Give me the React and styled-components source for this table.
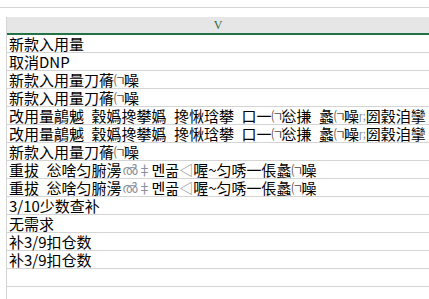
import React from "react";
import styled, { createGlobalStyle } from "styled-components";

const Global = createGlobalStyle`
  html, body { margin: 0; padding: 0; background: #ffffff; }
  body { width: 429px; height: 299px; overflow: hidden; font-family: "Noto Sans CJK SC", sans-serif; }
`;

const Page = styled.div`
  width: 429px;
  height: 299px;
  overflow: hidden;
  display: flex;
  flex-direction: column;
`;

const FormulaEdge = styled.div`
  height: 7px;
  border-bottom: 1px solid #d4d4d4;
  flex: none;
`;

const Gap = styled.div`
  height: 9px;
  flex: none;
`;

const Sheet = styled.div`
  margin-left: 6px;
  flex: 1;
  display: flex;
  flex-direction: column;
  border-left: 1px solid #d4d4d4;
  min-width: 0;
`;

const ColHeader = styled.div`
  height: 16px;
  flex: none;
  background: #e6e6e6;
  border-bottom: 2px solid #217346;
  display: flex;
  align-items: center;
  justify-content: center;
  font-family: "Liberation Serif", "Noto Sans CJK SC", serif;
  font-size: 12px;
  color: #2f6a49;
  line-height: 16px;
`;

const Row = styled.div`
  height: 17px;
  flex: none;
  border-bottom: 1px solid #d4d4d4;
  padding-left: 2px;
  display: flex;
  align-items: center;
  white-space: pre;
  font-family: "Noto Sans CJK SC", sans-serif;
  font-size: 15px;
  line-height: 17px;
  color: #000000;
`;

const Faint = styled.span`
  color: #8a8f9a;
  font-size: ${(p) => p.$size || 11}px;
`;

const Paren = styled.span`
  font-size: 13px;
  letter-spacing: -3px;
  color: #4a4a4a;
`;

const S = "\u2002";

const mixA = (
  <>
    {`改用量鶮魆${S}穀嬀搀攀嬀${S}搀愀琀攀${S}口一`}<Paren>㈀</Paren>{`忩搛${S}蠡`}<Paren>㈀</Paren>噪<Faint $size={11}>ɼ;</Faint>圀穀洎攣
  </>
);

const mixB = (
  <>
    {`重拔${S}忩啥匀腑澷`}<Faint $size={14}>ൽ‡</Faint>멘곪<Faint $size={14}>◁</Faint>喔~匀唀一倀蠡<Paren>㈀</Paren>噪
  </>
);

const newUse = (
  <>
    新款入用量刀蓨<Paren>㈀</Paren>噪
  </>
);

const rows = [
  "新款入用量",
  "取消DNP",
  newUse,
  newUse,
  mixA,
  mixA,
  newUse,
  mixB,
  mixB,
  "3/10少数查补",
  "无需求",
  "补3/9扣仓数",
  "补3/9扣仓数",
  "",
  "",
];

export default function App() {
  return (
    <Page>
      <Global />
      <FormulaEdge />
      <Gap />
      <Sheet>
        <ColHeader>V</ColHeader>
        {rows.map((r, i) => (
          <Row key={i}>{r}</Row>
        ))}
      </Sheet>
    </Page>
  );
}
